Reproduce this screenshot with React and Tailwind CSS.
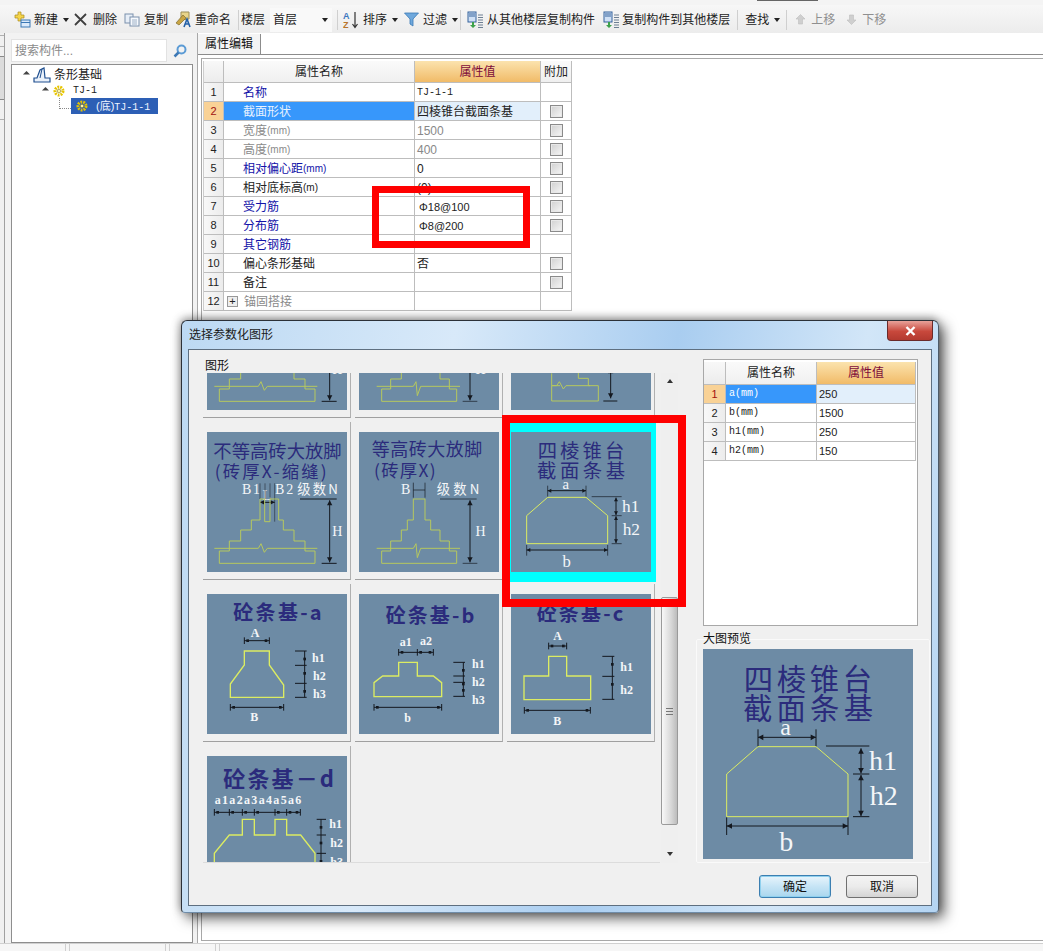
import React from "react";

const NAVY = "#2b2b7c";
const DIM = "#14181f";
const SERIF = "'Liberation Serif', serif";
const CJK = "'Noto Sans CJK SC', sans-serif";

function T({ x, y, s = 42, c = "#f4f6f8", f = SERIF, w, b, a, children }) {
  return (
    <text x={x} y={y} fontSize={s} fill={c} fontFamily={f} fontWeight={b ? 700 : 400} dominantBaseline="central" textAnchor={a || (w ? "start" : "middle")} textLength={w} lengthAdjust={w ? "spacing" : undefined}>
      {children}
    </text>
  );
}
function L({ d, c = DIM, w = 3 }) {
  return <path d={d} fill="none" stroke={c} strokeWidth={w} />;
}
function VA({ x, a, b, h = 12 }) {
  return (
    <g fill={DIM}>
      <path d={`M${x} ${a}V${b}`} stroke={DIM} strokeWidth="3" />
      <path d={`M${x - h / 2 - 2} ${a + h + 3}L${x} ${a}L${x + h / 2 + 2} ${a + h + 3}Z`} />
      <path d={`M${x - h / 2 - 2} ${b - h - 3}L${x} ${b}L${x + h / 2 + 2} ${b - h - 3}Z`} />
    </g>
  );
}
function HA({ y, a, b, h = 12 }) {
  return (
    <g fill={DIM}>
      <path d={`M${a} ${y}H${b}`} stroke={DIM} strokeWidth="3" />
      <path d={`M${a + h + 3} ${y - h / 2 - 2}L${a} ${y}L${a + h + 3} ${y + h / 2 + 2}Z`} />
      <path d={`M${b - h - 3} ${y - h / 2 - 2}L${b} ${y}L${b - h - 3} ${y + h / 2 + 2}Z`} />
    </g>
  );
}
function Pic({ ox, oy, size = 140, children }) {
  const u = size * 3;
  return (
    <svg width={size} height={size} viewBox={`0 0 ${u} ${u}`} className="block bg-[#6d8ba5]">
      <g transform={`translate(${-ox} ${-oy})`}>{children}</g>
    </svg>
  );
}

const BRICK = "#b6c85e";
const YEL = "#dcec62";

function Tile1() {
  return (
    <Pic ox={81} oy={351}>
      <T x={100} y={404} s={55} c={NAVY} f={CJK} w={385}>不等高砖大放脚</T>
      <T x={104} y={465} s={52} c={NAVY} f={CJK} w={336}>(砖厚X-缩缝)</T>
      <T x={186} y={524} s={42} w={54}>B1</T>
      <T x={260} y={540} s={42}>L</T>
      <T x={285} y={524} s={42} w={55}>B2</T>
      <T x={352} y={520} s={40} f={CJK} w={122}>级数N</T>
      <T x={472} y={648} s={42}>H</T>
      <L d="M360 552H470M425 745H470" />
      <VA x={449} a={556} b={742} />
      <L d="M240 505V552M255 505V552M270 505V552M284 505V620" w={2} c="#2b3540" />
      <HA y={562} a={240} b={284} h={9} />
      <L c={BRICK} d="M118 745V708H148V678H182V645H214V615H240V552H254V620H270V552H296V615H310V645H342V678H375V708H405V745ZM103 700H235L243 686L253 712L262 700H412" />
    </Pic>
  );
}
function Tile2() {
  return (
    <Pic ox={537} oy={351}>
      <T x={575} y={400} s={54} c={NAVY} f={CJK} w={332}>等高砖大放脚</T>
      <T x={582} y={462} s={52} c={NAVY} f={CJK} w={185}>(砖厚X)</T>
      <T x={677} y={524} s={42}>B</T>
      <T x={770} y={520} s={40} f={CJK} w={128}>级数N</T>
      <T x={902} y={648} s={42}>H</T>
      <L d="M700 503V548M735 503V548M700 525H735M780 552H890M848 745H892" w={2} />
      <VA x={870} a={556} b={742} />
      <L c={BRICK} d="M605 745V708H632V678H664V645H682V615H700V552H735V615H752V645H780V678H808V708H830V745ZM590 700H700L708 686L712 728L722 700H840" />
    </Pic>
  );
}
function Tile3Top() {
  return (
    <Pic ox={33} oy={-135}>
      <VA x={332} a={160} b={250} />
      <L d="M310 258H352" />
      <L c={BRICK} d="M155 175V212H180M155 212H170L178 200L190 222L198 212H270M155 212V258H295V212H265V190H235V172" />
    </Pic>
  );
}
function Selected() {
  return (
    <Pic ox={33} oy={351}>
      <T x={113} y={405} s={58} c={NAVY} f={CJK} w={260}>四棱锥台</T>
      <T x={111} y={465} s={58} c={NAVY} f={CJK} w={264}>截面条基</T>
      <T x={197} y={506} s={44}>a</T>
      <L d="M143 512V545M258 512V545M275 545H365M335 602H365M335 686H365M80 690V722M323 690V722" w={2} />
      <HA y={527} a={143} b={258} h={8} />
      <VA x={348} a={548} b={600} h={8} />
      <VA x={348} a={604} b={684} h={8} />
      <L c={YEL} d="M143 547H258L323 602V686H80V602Z" />
      <T x={392} y={575} s={52}>h1</T>
      <T x={394} y={642} s={52}>h2</T>
      <HA y={705} a={80} b={323} h={8} />
      <T x={200} y={738} s={50}>b</T>
    </Pic>
  );
}
function Preview() {
  return (
    <Pic ox={128} oy={147} size={210}>
      <T x={250} y={230} s={88} c={NAVY} f={CJK} w={385}>四棱锥台</T>
      <T x={248} y={318} s={88} c={NAVY} f={CJK} w={390}>截面条基</T>
      <T x={376} y={380} s={72}>a</T>
      <L d="M293 388V440M467 388V440M497 438H627M578 522H627M578 650H627M199 652V705M563 652V705" />
      <HA y={412} a={293} b={467} h={13} />
      <VA x={602} a={445} b={520} h={13} />
      <VA x={602} a={525} b={648} h={13} />
      <L c={YEL} d="M293 440H467L563 522V650H199V522Z" />
      <T x={668} y={480} s={84}>h1</T>
      <T x={670} y={585} s={84}>h2</T>
      <HA y={678} a={199} b={563} h={13} />
      <T x={378} y={723} s={84}>b</T>
    </Pic>
  );
}
function Ticks({ x, ys, a, b }) {
  return (
    <>
      <L d={ys.map((y) => `M${a} ${y}H${b}`).join("")} />
      <L d={`M${x} ${ys[0]}V${ys[ys.length - 1]}`} />
      {ys.slice(0, -1).map((y) => (
        <g key={y} fill={DIM}>
          <rect x={x - 4} y={y + 20} width="8" height="8" />
        </g>
      ))}
    </>
  );
}
function Hd({ y, xs, t = 10 }) {
  return (
    <>
      <L d={`M${xs[0]} ${y}H${xs[xs.length - 1]}` + xs.map((x) => `M${x} ${y - t}V${y + t}`).join("")} />
      {xs.slice(0, -1).map((x) => (
        <rect key={x} x={x + 6} y={y - 4} width="8" height="8" fill={DIM} />
      ))}
      <rect x={xs[xs.length - 1] - 14} y={y - 4} width="8" height="8" fill={DIM} />
    </>
  );
}
function ConA() {
  return (
    <Pic ox={51} oy={27}>
      <T x={130} y={78} s={60} c={NAVY} f={CJK} b w={265}>砼条基-a</T>
      <T x={195} y={145} s={36} b>A</T>
      <Hd y={167} xs={[163, 238]} />
      <L c={YEL} d="M163 198H238V240L281 300V337H121V297L163 240Z" w={4} />
      <Ticks x={344} ys={[198, 241, 295, 337]} a={315} b={350} />
      <T x={385} y={218} s={36} b>h1</T>
      <T x={388} y={272} s={36} b>h2</T>
      <T x={388} y={326} s={36} b>h3</T>
      <Hd y={367} xs={[121, 281]} />
      <T x={193} y={395} s={36} b>B</T>
    </Pic>
  );
}
function ConB() {
  return (
    <Pic ox={507} oy={27}>
      <T x={587} y={87} s={60} c={NAVY} f={CJK} b w={266}>砼条基-b</T>
      <T x={647} y={170} s={36} b>a1</T>
      <T x={708} y={167} s={36} b>a2</T>
      <Hd y={202} xs={[626, 682, 730]} />
      <L c={YEL} d="M626 232H682V273H730L755 293V335H552V293L578 273H626Z" w={4} />
      <Ticks x={820} ys={[232, 273, 292, 334]} a={790} b={825} />
      <T x={865} y={236} s={36} b>h1</T>
      <T x={865} y={290} s={36} b>h2</T>
      <T x={865} y={344} s={36} b>h3</T>
      <Hd y={367} xs={[552, 755]} />
      <T x={653} y={399} s={36} b>b</T>
    </Pic>
  );
}
function ConC() {
  return (
    <Pic ox={963} oy={27}>
      <T x={1040} y={82} s={60} c={NAVY} f={CJK} b w={260}>砼条基-c</T>
      <T x={1103} y={153} s={36} b>A</T>
      <Hd y={183} xs={[1076, 1130]} />
      <L c={YEL} d="M1076 214H1130V273H1202V344H1002V273H1076Z" w={4} />
      <Ticks x={1267} ys={[214, 274, 343]} a={1237} b={1273} />
      <T x={1310} y={245} s={36} b>h1</T>
      <T x={1310} y={314} s={36} b>h2</T>
      <Hd y={376} xs={[1003, 1201]} />
      <T x={1102} y={407} s={36} b>B</T>
    </Pic>
  );
}
function ConD() {
  return (
    <Pic ox={51} oy={513}>
      <T x={100} y={577} s={66} c={NAVY} f={CJK} b w={332}>砼条基－d</T>
      <T x={74} y={645} s={36} b w={260}>a1a2a3a4a5a6</T>
      <Hd y={682} xs={[73, 118, 157, 193, 255, 290, 331]} />
      <L c={YEL} d="M73 840V805L118 750H157V703H193V750H255V703H290V750H332L375 805V840" w={4} />
      <Ticks x={393} ys={[703, 750, 805, 880]} a={380} b={408} />
      <T x={437} y={718} s={36} b>h1</T>
      <T x={440} y={775} s={36} b>h2</T>
      <T x={440} y={832} s={36} b>h3</T>
    </Pic>
  );
}

function Tile({ children, selected }) {
  return selected ? (
    <div className="h-[159px] -mb-[2px] pl-[4px] pt-[9px] mt-px mr-[-1px] bg-[#00ffff]">{children}</div>
  ) : (
    <div className="h-[158px] pl-[4px] pt-[10px] border-r border-b border-r-[#b0b0b0] border-b-[#a0a0a0] bg-[#f0f0f0]">{children}</div>
  );
}

const Caret = () => <span className="inline-block ml-[5px] border-x-[3px] border-t-[4px] border-x-transparent border-t-[#222]" />;
const Sep = ({ ml }) => <span className={`h-[20px] w-px bg-[#cfcfcf] ${ml}`} />;

const INew = () => (
  <svg width="17" height="17" viewBox="0 0 17 17" className="block">
    <path d="M4 1h3v3h3v3H7v3H4V7H1V4h3z" fill="#f5d54a" stroke="#a98a1c" strokeWidth=".7" />
    <rect x="7" y="9" width="9" height="7" fill="#dbeafa" stroke="#3b78b5" />
    <path d="M7 11.5h9" stroke="#3b78b5" />
  </svg>
);
const IDel = () => (
  <svg width="13" height="13" viewBox="0 0 13 13" className="block"><path d="M1 1l11 11M12 1L1 12" stroke="#3f3f3f" strokeWidth="1.8" /></svg>
);
const ICopy = () => (
  <svg width="16" height="14" viewBox="0 0 16 14" className="block">
    <rect x="1" y="1" width="8" height="9" fill="#e7eef7" stroke="#7a90ac" />
    <rect x="6" y="4" width="9" height="9" fill="#f6f9fd" stroke="#7a90ac" />
    <path d="M8 7h5M8 9h5M8 11h5" stroke="#9db0c6" />
  </svg>
);
const IRename = () => (
  <svg width="17" height="17" viewBox="0 0 17 17" className="block">
    <path d="M6 1h8v7L6 9z" fill="#e8d48a" stroke="#9b8e58" />
    <path d="M1 12L8 4l3 3-7 7z" fill="#c9a544" stroke="#7e6c2e" strokeWidth=".7" />
    <path d="M9 16l3-8 3 8M10 13h4" fill="none" stroke="#2460a8" strokeWidth="1.6" />
  </svg>
);
const ISort = () => (
  <svg width="16" height="18" viewBox="0 0 16 18" className="block">
    <text x="0" y="8" fontSize="9" fontWeight="700" fill="#3c78c0" fontFamily="Liberation Sans">A</text>
    <text x="0" y="17" fontSize="9" fontWeight="700" fill="#b8752c" fontFamily="Liberation Sans">Z</text>
    <path d="M12 1v15M9.5 13l2.5 3.5 2.5-3.5" fill="none" stroke="#333" strokeWidth="1.2" />
  </svg>
);
const IFilter = () => (
  <svg width="15" height="15" viewBox="0 0 15 15" className="block">
    <path d="M0.5 1h14L9 7v7L6 12V7z" fill="#6fa8dc" stroke="#3a78b5" strokeWidth=".8" />
  </svg>
);
const IFloor = () => (
  <svg width="17" height="18" viewBox="0 0 17 18" className="block">
    <rect x="1" y="1" width="8" height="10" fill="#cfe0f5" stroke="#34629c" />
    <path d="M2 3h6M2 5h6" stroke="#34629c" />
    <path d="M5 11v3H3l3 3 3-3H7v-3z" fill="#3da14a" />
    <path d="M11 4h5M11 6.500h5M11 9h5M11 11.500h5M11 14h5M11 16.500h5" stroke="#6d7f93" />
  </svg>
);
const IUp = ({ down }) => (
  <svg width="11" height="11" viewBox="0 0 11 11" className="block">
    <path d={down ? "M3.500 1h4v5H10L5.500 10.500 1 6h2.500z" : "M3.500 10h4V5H10L5.500 .5 1 5h2.500z"} fill="#cfcfcf" stroke="#bdbdbd" strokeWidth=".6" />
  </svg>
);
const IGear = () => (
  <svg width="12" height="12" viewBox="0 0 12 12" className="block">
    <circle cx="6" cy="6" r="4" fill="none" stroke="#e6c400" strokeWidth="3" strokeDasharray="1.8 1" />
    <circle cx="6" cy="6" r="1.800" fill="#fff6a8" stroke="#6a5a00" strokeWidth=".5" />
  </svg>
);
const IStrip = () => (
  <svg width="18" height="16" viewBox="0 0 18 16" className="block">
    <path d="M1 15V11H4L7 3 11 1l1 10h5v4z" fill="#eaf1fa" stroke="#1f4f8f" strokeWidth="1.2" />
    <path d="M9 2l-2 9" stroke="#1f4f8f" />
  </svg>
);
const Expand = () => <span className="block border-l-[5px] border-t-[5px] border-l-transparent border-t-[#444] rotate-[-45deg] translate-x-[1px]" />;

const Check = () => (
  <span className="block w-[13px] h-[13px] border border-[#8a8a8a] bg-[linear-gradient(135deg,#d0d0d0,#f6f6f6)] outline outline-1 -outline-offset-2 outline-[#e8e8e8]" />
);

const U = ({ children }) => <span className="text-[10px]">{children}</span>;
const rows = [
  { n: 1, name: "名称", c: "b", val: "TJ-1-1", mono: true, noCheck: true },
  { n: 2, name: "截面形状", sel: true, val: "四棱锥台截面条基" },
  { n: 3, name: <>宽度<U>(mm)</U></>, c: "g", val: "1500", vg: true },
  { n: 4, name: <>高度<U>(mm)</U></>, c: "g", val: "400", vg: true },
  { n: 5, name: <>相对偏心距<U>(mm)</U></>, c: "b", val: "0" },
  { n: 6, name: <>相对底标高<U>(m)</U></>, c: "k", val: "(0)" },
  { n: 7, name: "受力筋", c: "b", val: "Φ18@100", sm: true },
  { n: 8, name: "分布筋", c: "b", val: "Φ8@200", sm: true },
  { n: 9, name: "其它钢筋", c: "b", val: "", noCheck: true },
  { n: 10, name: "偏心条形基础", c: "k", val: "否" },
  { n: 11, name: "备注", c: "k", val: "" },
  { n: 12, name: "锚固搭接", c: "g", val: "", plus: true, noCheck: true },
];
const nameColor = { b: "text-[#1212a8]", g: "text-[#8a8a8a]", k: "text-[#222]" };

const cell = "border-r border-b border-[#bdbdbd] flex items-center";

function MainTable() {
  return (
    <div className="mt-[2px] ml-px w-[369px] border-l border-[#cdcdcd] text-[12px] leading-[14px]">
      <div className="grid grid-cols-[20px_191px_126px_31px] h-[22px]">
        <div className={`${cell} bg-[linear-gradient(#f8f8f8,#ececec)]`} />
        <div className={`${cell} justify-center bg-[linear-gradient(#fafafa,#f0f0f0)] text-[#222]`}>属性名称</div>
        <div className={`${cell} justify-center bg-[linear-gradient(#fbe3ae,#f1bb68)] text-[#7d0b3a]`}>属性值</div>
        <div className={`${cell} justify-center bg-[linear-gradient(#fafafa,#f0f0f0)] text-[#222]`}>附加</div>
      </div>
      {rows.map((r) => (
        <div key={r.n} className="grid grid-cols-[20px_191px_126px_31px] h-[19px]">
          <div className={`${cell} justify-center text-[11px] ${r.sel ? "bg-[#f9d296] text-[#a01010]" : "bg-[linear-gradient(90deg,#f8f8f8,#ececec)] text-[#222]"}`}>{r.n}</div>
          <div className={`${cell} pt-px ${r.plus ? "pl-[3px]" : "pl-[19px]"} ${r.sel ? "bg-[#3797fb] text-[#e8f2ff]" : nameColor[r.c]}`}>
            {r.plus && (
              <span className="w-[11px] h-[11px] mr-[6px] border border-[#999] bg-[#eee] flex items-center justify-center text-[#222] text-[11px] leading-[9px]">+</span>
            )}
            {r.name}
          </div>
          <div className={`${cell} pt-px pl-[2px] ${r.sel ? "bg-[#e2effb]" : "bg-white"} ${r.vg ? "text-[#888]" : "text-[#222]"} ${r.mono ? "font-['Liberation_Mono','Noto_Sans_CJK_SC',monospace] text-[10px]" : ""} ${r.sm ? "pl-[4px] text-[11px]" : ""}`}>{r.val}</div>
          <div className={`${cell} justify-center bg-white`}>{!r.noCheck && <Check />}</div>
        </div>
      ))}
    </div>
  );
}

const sub = [
  { n: 1, name: "a", unit: "(mm)", v: "250", sel: true },
  { n: 2, name: "b", unit: "(mm)", v: "1500" },
  { n: 3, name: "h1", unit: "(mm)", v: "250" },
  { n: 4, name: "h2", unit: "(mm)", v: "150" },
];
function SubTable() {
  return (
    <div className="w-[215px] h-[267px] border border-[#a8a8a8] bg-white pt-[2px] text-[12px] leading-[14px]">
      <div className="grid grid-cols-[22px_91px_99px] h-[23px]">
        <div className={`${cell} bg-[linear-gradient(#f8f8f8,#ececec)]`} />
        <div className={`${cell} justify-center bg-[linear-gradient(#fafafa,#f0f0f0)] text-[#222]`}>属性名称</div>
        <div className={`${cell} justify-center bg-[linear-gradient(#fbe3ae,#f1bb68)] text-[#7d0b3a]`}>属性值</div>
      </div>
      {sub.map((r) => (
        <div key={r.n} className="grid grid-cols-[22px_91px_99px] h-[19px]">
          <div className={`${cell} justify-center text-[11px] ${r.sel ? "bg-[#f9d296] text-[#a01010]" : "bg-[linear-gradient(90deg,#f8f8f8,#ececec)] text-[#222]"}`}>{r.n}</div>
          <div className={`${cell} pl-[3px] text-[10px] font-['Liberation_Mono',monospace] ${r.sel ? "bg-[#3797fb] text-white" : "text-[#222]"}`}>{r.name}{r.unit}</div>
          <div className={`${cell} pl-[2px] text-[11px] text-[#222] ${r.sel ? "bg-[#e2effb]" : ""}`}>{r.v}</div>
        </div>
      ))}
    </div>
  );
}

function Scroll() {
  return (
    <div className="w-[17px] ml-[1px] flex flex-col bg-[#efefef]">
      <div className="h-[16px] flex items-center justify-center shrink-0">
        <span className="border-x-[3px] border-b-[4px] border-x-transparent border-b-[#333]" />
      </div>
      <div className="flex-1 pt-[208px]">
        <div className="h-[228px] rounded-[2px] border border-[#9a9a9a] bg-[linear-gradient(90deg,#f8f8f8,#d8d8d8_60%,#bcbcbc)] flex items-center justify-center">
          <div className="w-[7px] h-[7px] border-y border-[#777] flex items-center"><div className="w-full h-px bg-[#777]" /></div>
        </div>
      </div>
      <div className="h-[18px] flex items-center justify-center shrink-0">
        <span className="border-x-[3px] border-t-[4px] border-x-transparent border-t-[#333]" />
      </div>
    </div>
  );
}

function Dialog() {
  return (
    <div className="absolute left-[181px] top-[320px] w-[758px] h-[593px] flex flex-col rounded-t-[6px] rounded-b-[4px] border border-[#2c3138] border-b-[#6f8ca8] border-r-[#4d5a68] bg-[linear-gradient(100deg,#bcd9f3,#d8e9f9_32%,#a9cdf0_58%,#d2e6f8_80%,#b4d4f2)] shadow-[5px_5px_14px_rgba(0,0,0,0.65),-1px_-2px_8px_rgba(0,0,0,0.35)] px-[6px] pb-[6px]">
      <div className="h-[28px] shrink-0 flex justify-between items-start text-[12px] text-[#1a1a1a]">
        <span className="mt-[6px] ml-px leading-[16px]">选择参数化图形</span>
        <div className="w-[46px] h-[20px] -mr-[1px] rounded-b-[4px] border border-t-0 border-[#6a2a2a] bg-[linear-gradient(#e8a29a,#c8483c_55%,#b33a30)] flex items-center justify-center">
          <svg width="11" height="10" viewBox="0 0 11 10"><path d="M1.500 1l8 8M9.500 1l-8 8" stroke="#fff" strokeWidth="2.400" /></svg>
        </div>
      </div>
      <div className="flex-1 flex flex-col bg-[#f0f0f0] border border-[#5e6f80] min-h-0">
        <div className="h-[517px] flex shrink-0">
          <div className="w-[500px] pl-[14px] pt-[10px]">
            <div className="h-[13px] leading-[13px] text-[12px] text-[#111] pl-[2px]">图形</div>
            <div className="w-[477px] h-[490px] flex overflow-hidden">
              <div className="w-[457px] h-full overflow-hidden border-b border-[#dcdcdc]">
                <div className="grid grid-cols-[148px_148px_148px] gap-x-[4px] gap-y-[4px] -mt-[113px]">
                  <Tile><Tile1 /></Tile>
                  <Tile><Tile2 /></Tile>
                  <Tile><Tile3Top /></Tile>
                  <Tile><Tile1 /></Tile>
                  <Tile><Tile2 /></Tile>
                  <Tile selected><Selected /></Tile>
                  <Tile><ConA /></Tile>
                  <Tile><ConB /></Tile>
                  <Tile><ConC /></Tile>
                  <Tile><ConD /></Tile>
                </div>
              </div>
              <Scroll />
            </div>
          </div>
          <div className="w-[234px] ml-[7px]">
            <div className="pl-[7px] pt-[9px]"><SubTable /></div>
            <div className="mt-[13px] h-[224px] border border-[#fafafa] rounded-[2px]">
              <div className="-mt-[7px] ml-[6px] h-[12px] leading-[12px] text-[12px] text-[#111]">大图预览</div>
              <div className="mt-[4px] ml-[6px]"><Preview /></div>
            </div>
          </div>
        </div>
        <div className="flex-1 flex justify-end items-start gap-[15px] pr-[13px] pt-[8px] text-[12px] text-[#111]">
          <button className="w-[72px] h-[23px] rounded-[3px] border border-[#3c7fb1] bg-[linear-gradient(#e8f5fc,#c6e4f5_50%,#a9d6ee)] shadow-[inset_0_0_0_1px_#8fd0ee]">确定</button>
          <button className="w-[72px] h-[23px] rounded-[3px] border border-[#707070] bg-[linear-gradient(#f4f4f4,#ebebeb_50%,#d4d4d4)]">取消</button>
        </div>
      </div>
    </div>
  );
}

const Red = ({ cls }) => <div className={`absolute border-[#ff0000] ${cls}`} />;

export default function App() {
  return (
    <div className="relative w-[1043px] h-[951px] overflow-hidden flex flex-col bg-white text-[12px] font-['Liberation_Sans','Noto_Sans_CJK_SC',sans-serif]">
      <div className="h-[5px] bg-[#f4f4f4] shrink-0 pl-[757px]"><div className="w-[61px] h-px bg-[#666]" /></div>
      <div className="h-[28px] shrink-0 flex items-center pl-[14px] pt-px text-[12px] text-[#222] bg-[linear-gradient(#f7f7f7,#ececec)] whitespace-nowrap">
        <INew /><span className="ml-[3px]">新建</span><Caret />
        <span className="ml-[5px]"><IDel /></span><span className="ml-[6px]">删除</span>
        <span className="ml-[7px]"><ICopy /></span><span className="ml-[4px]">复制</span>
        <span className="ml-[7px]"><IRename /></span><span className="ml-[3px]">重命名</span>
        <Sep ml="ml-[7px]" />
        <span className="ml-[2px]">楼层</span>
        <div className="ml-[5px] w-[62px] h-[24px] bg-[#f9f9f9] flex items-center pl-[3px] justify-between pr-[4px]">首层<Caret /></div>
        <Sep ml="ml-[5px]" />
        <span className="ml-[5px]"><ISort /></span><span className="ml-[4px]">排序</span><Caret />
        <span className="ml-[6px]"><IFilter /></span><span className="ml-[4px]">过滤</span><Caret />
        <Sep ml="ml-[2px]" />
        <span className="ml-[6px]"><IFloor /></span><span className="ml-[3px]">从其他楼层复制构件</span>
        <span className="ml-[8px]"><IFloor /></span><span className="ml-[2px]">复制构件到其他楼层</span>
        <Sep ml="ml-[7px]" />
        <span className="ml-[7px]">查找</span><Caret />
        <Sep ml="ml-[6px]" />
        <span className="ml-[8px]"><IUp /></span><span className="ml-[5px] text-[#8f8f8f]">上移</span>
        <span className="ml-[11px]"><IUp down /></span><span className="ml-[5px] text-[#8f8f8f]">下移</span>
      </div>
      <div className="flex-1 flex min-h-0">
        <div className="w-[5px] shrink-0 flex flex-col bg-[#f0f0f0] border-r border-[#a0a0a0]">
          <div className="h-[12px] mt-[2px] border-y border-[#b0b0b0]" />
          <div className="h-[44px] mt-[9px] border-y border-[#8a8a8a] bg-[#dcdcdc]" />
          <div className="h-[20px] border-b border-[#b0b0b0]" />
        </div>
        <div className="w-[188px] shrink-0 flex flex-col pl-[6px] pt-[6px] bg-[#f2f2f2]">
          <div className="flex items-center h-[23px] shrink-0">
            <div className="w-[156px] h-[23px] bg-white border border-[#e2e2e2] pl-[3px] flex items-center text-[#8a8a8a]">搜索构件...</div>
            <svg width="16" height="16" viewBox="0 0 16 16" className="ml-[5px]">
              <circle cx="9.500" cy="6.500" r="4" fill="none" stroke="#5b9bd5" strokeWidth="2" />
              <path d="M6.500 9.500l-4 4" stroke="#3d78b5" strokeWidth="2.500" />
            </svg>
          </div>
          <div className="flex-1 mt-[2px] bg-white border border-[#8e8e8e] text-[12px] text-[#222] min-w-0">
            <div className="h-[19px] flex items-center pl-[11px]">
              <Expand /><span className="w-[5px]" /><IStrip /><span className="ml-[3px]">条形基础</span>
            </div>
            <div className="h-[15px] -mt-px flex items-center pl-[30px]">
              <Expand /><span className="w-[6px]" /><IGear /><span className="ml-[8px] font-['Liberation_Mono',monospace] text-[10px]">TJ-1</span>
            </div>
            <div className="flex pl-[47px] h-[17px]">
              <span className="w-[12px] h-[11px] border-l border-b border-dotted border-[#888]" />
              <div className="w-[87px] h-[16px] bg-[#2d5fb5] flex items-center pl-[5px] text-[#f0f4ff] text-[11px]">
                <IGear /><span className="ml-[8px] whitespace-nowrap">(底)<span className="font-['Liberation_Mono',monospace] text-[10px]">TJ-1-1</span></span>
              </div>
            </div>
          </div>
        </div>
        <div className="w-[4px] shrink-0 bg-[#f2f2f2]" />
        <div className="flex-1 flex flex-col min-w-0 pt-[2px] border-l border-[#a8a8a8]">
          <div className="h-[20px] flex items-end shrink-0 border-b border-[#8c8c8c]">
            <div className="h-[20px] w-[63px] bg-[#f4f4f4] border-r border-[#8c8c8c] flex items-center justify-center text-[#111]">属性编辑</div>
          </div>
          <div className="flex-1 mt-[3px] mb-[2px] ml-[3px] border-l border-t border-b border-[#a8a8a8] min-h-0">
            <MainTable />
          </div>
        </div>
      </div>
      <div className="h-[8px] shrink-0 flex bg-[#f6f6f6] border-t border-[#d0d0d0] gap-[3px]">
        <div className="w-[66px] border-r border-[#cfcfcf]" />
        <div className="w-[97px] border-x border-[#cfcfcf]" />
        <div className="w-[47px] border-x border-[#cfcfcf]" />
        <div className="flex-1 border-l border-[#cfcfcf]" />
      </div>
      <Dialog />
      <Red cls="border-[7px] left-[372px] top-[186px] w-[158px] h-[62px]" />
      <Red cls="border-[8px] left-[502px] top-[415px] w-[184px] h-[192px]" />
    </div>
  );
}
